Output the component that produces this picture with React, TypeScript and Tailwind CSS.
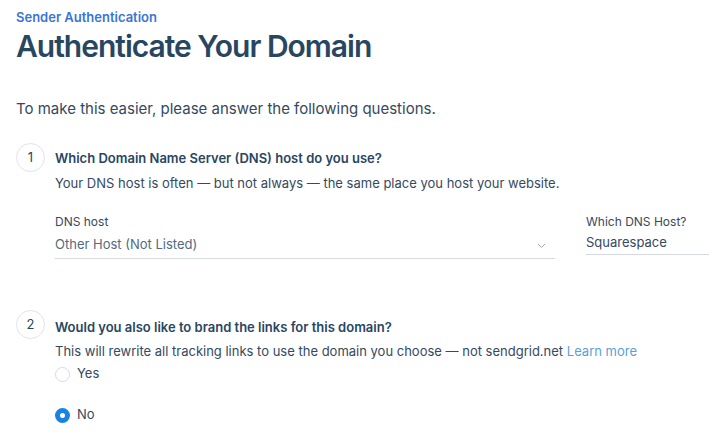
import React, { useState } from "react";

const StepBadge: React.FC<{ n: number }> = ({ n }) => (
  <div className="w-[29px] h-[29px] shrink-0 rounded-full border border-[#e1e4e8] flex items-center justify-center text-[13px] text-[#294661]">
    {n}
  </div>
);

const Radio: React.FC<{ label: string; checked: boolean; onChange: () => void }> = ({
  label,
  checked,
  onChange,
}) => (
  <label className="flex items-center gap-[7px] cursor-pointer h-[22px]">
    <span
      onClick={onChange}
      className={
        checked
          ? "w-[15px] h-[15px] rounded-full border-[5px] border-[#1a82e2] bg-white"
          : "w-[15px] h-[15px] rounded-full border border-[#d4dadf] bg-white"
      }
    />
    <span className="text-[13px] text-[#34495e]">{label}</span>
  </label>
);

export default function App() {
  const [brandLinks, setBrandLinks] = useState(false);

  return (
    <div
      className="bg-white min-h-screen pl-4 text-[#34495e]"
      style={{ fontFamily: "Inter, 'Noto Sans', sans-serif" }}
    >
      {/* Header */}
      <div className="pt-[8px]">
        <p className="text-[13px] leading-[18px] font-semibold text-[#3b74d4]">
          Sender Authentication
        </p>
        <h1 className="text-[30px] leading-[40px] font-semibold text-[#294661] tracking-[-1px]">
          Authenticate Your Domain
        </h1>
      </div>

      <p className="mt-[32px] text-[15px] leading-[22px] text-[#34495e]">
        To make this easier, please answer the following questions.
      </p>

      {/* Step 1 */}
      <div className="mt-[23px] flex gap-[10px]">
        <StepBadge n={1} />
        <div className="flex-1 pt-[6px]">
          <p className="text-[13px] leading-[18px] font-semibold text-[#294661]">
            Which Domain Name Server (DNS) host do you use?
          </p>
          <p className="mt-[7px] text-[13px] leading-[18px]">
            Your DNS host is often — but not always — the same place you host your website.
          </p>

          <div className="mt-[22px] flex gap-[31px]">
            <div className="w-[500px]">
              <p className="text-[12px] leading-[16px] text-[#34495e]">DNS host</p>
              <div className="mt-[4px] h-[22px] flex items-center justify-between border-b border-[#d4dadf] pb-[2px] box-content">
                <span className="text-[13px] text-[#516b82]">Other Host (Not Listed)</span>
                <svg width="9" height="6" viewBox="0 0 9 6" className="mr-[9px] mt-[2px]">
                  <path d="M1 1l3.5 3.5L8 1" fill="none" stroke="#9aa8b6" strokeWidth="1" />
                </svg>
              </div>
            </div>
            <div className="flex-1">
              <p className="text-[12px] leading-[16px] text-[#34495e]">Which DNS Host?</p>
              <div className="mt-[3px] h-[20px] flex items-center border-b border-[#d4dadf] pb-[1px] box-content">
                <span className="text-[13px] text-[#34495e]">Squarespace</span>
              </div>
            </div>
          </div>
        </div>
      </div>

      {/* Step 2 */}
      <div className="mt-[51px] flex gap-[10px]">
        <StepBadge n={2} />
        <div className="flex-1 pt-[8px]">
          <p className="text-[13px] leading-[18px] font-semibold text-[#294661]">
            Would you also like to brand the links for this domain?
          </p>
          <p className="mt-[6px] text-[13px] leading-[18px]">
            This will rewrite all tracking links to use the domain you choose — not sendgrid.net{" "}
            <a href="#" className="text-[#5a9fdb]">
              Learn more
            </a>
          </p>
          <div className="mt-[3px] flex flex-col gap-[19px]">
            <Radio label="Yes" checked={brandLinks} onChange={() => setBrandLinks(true)} />
            <Radio label="No" checked={!brandLinks} onChange={() => setBrandLinks(false)} />
          </div>
        </div>
      </div>
    </div>
  );
}
